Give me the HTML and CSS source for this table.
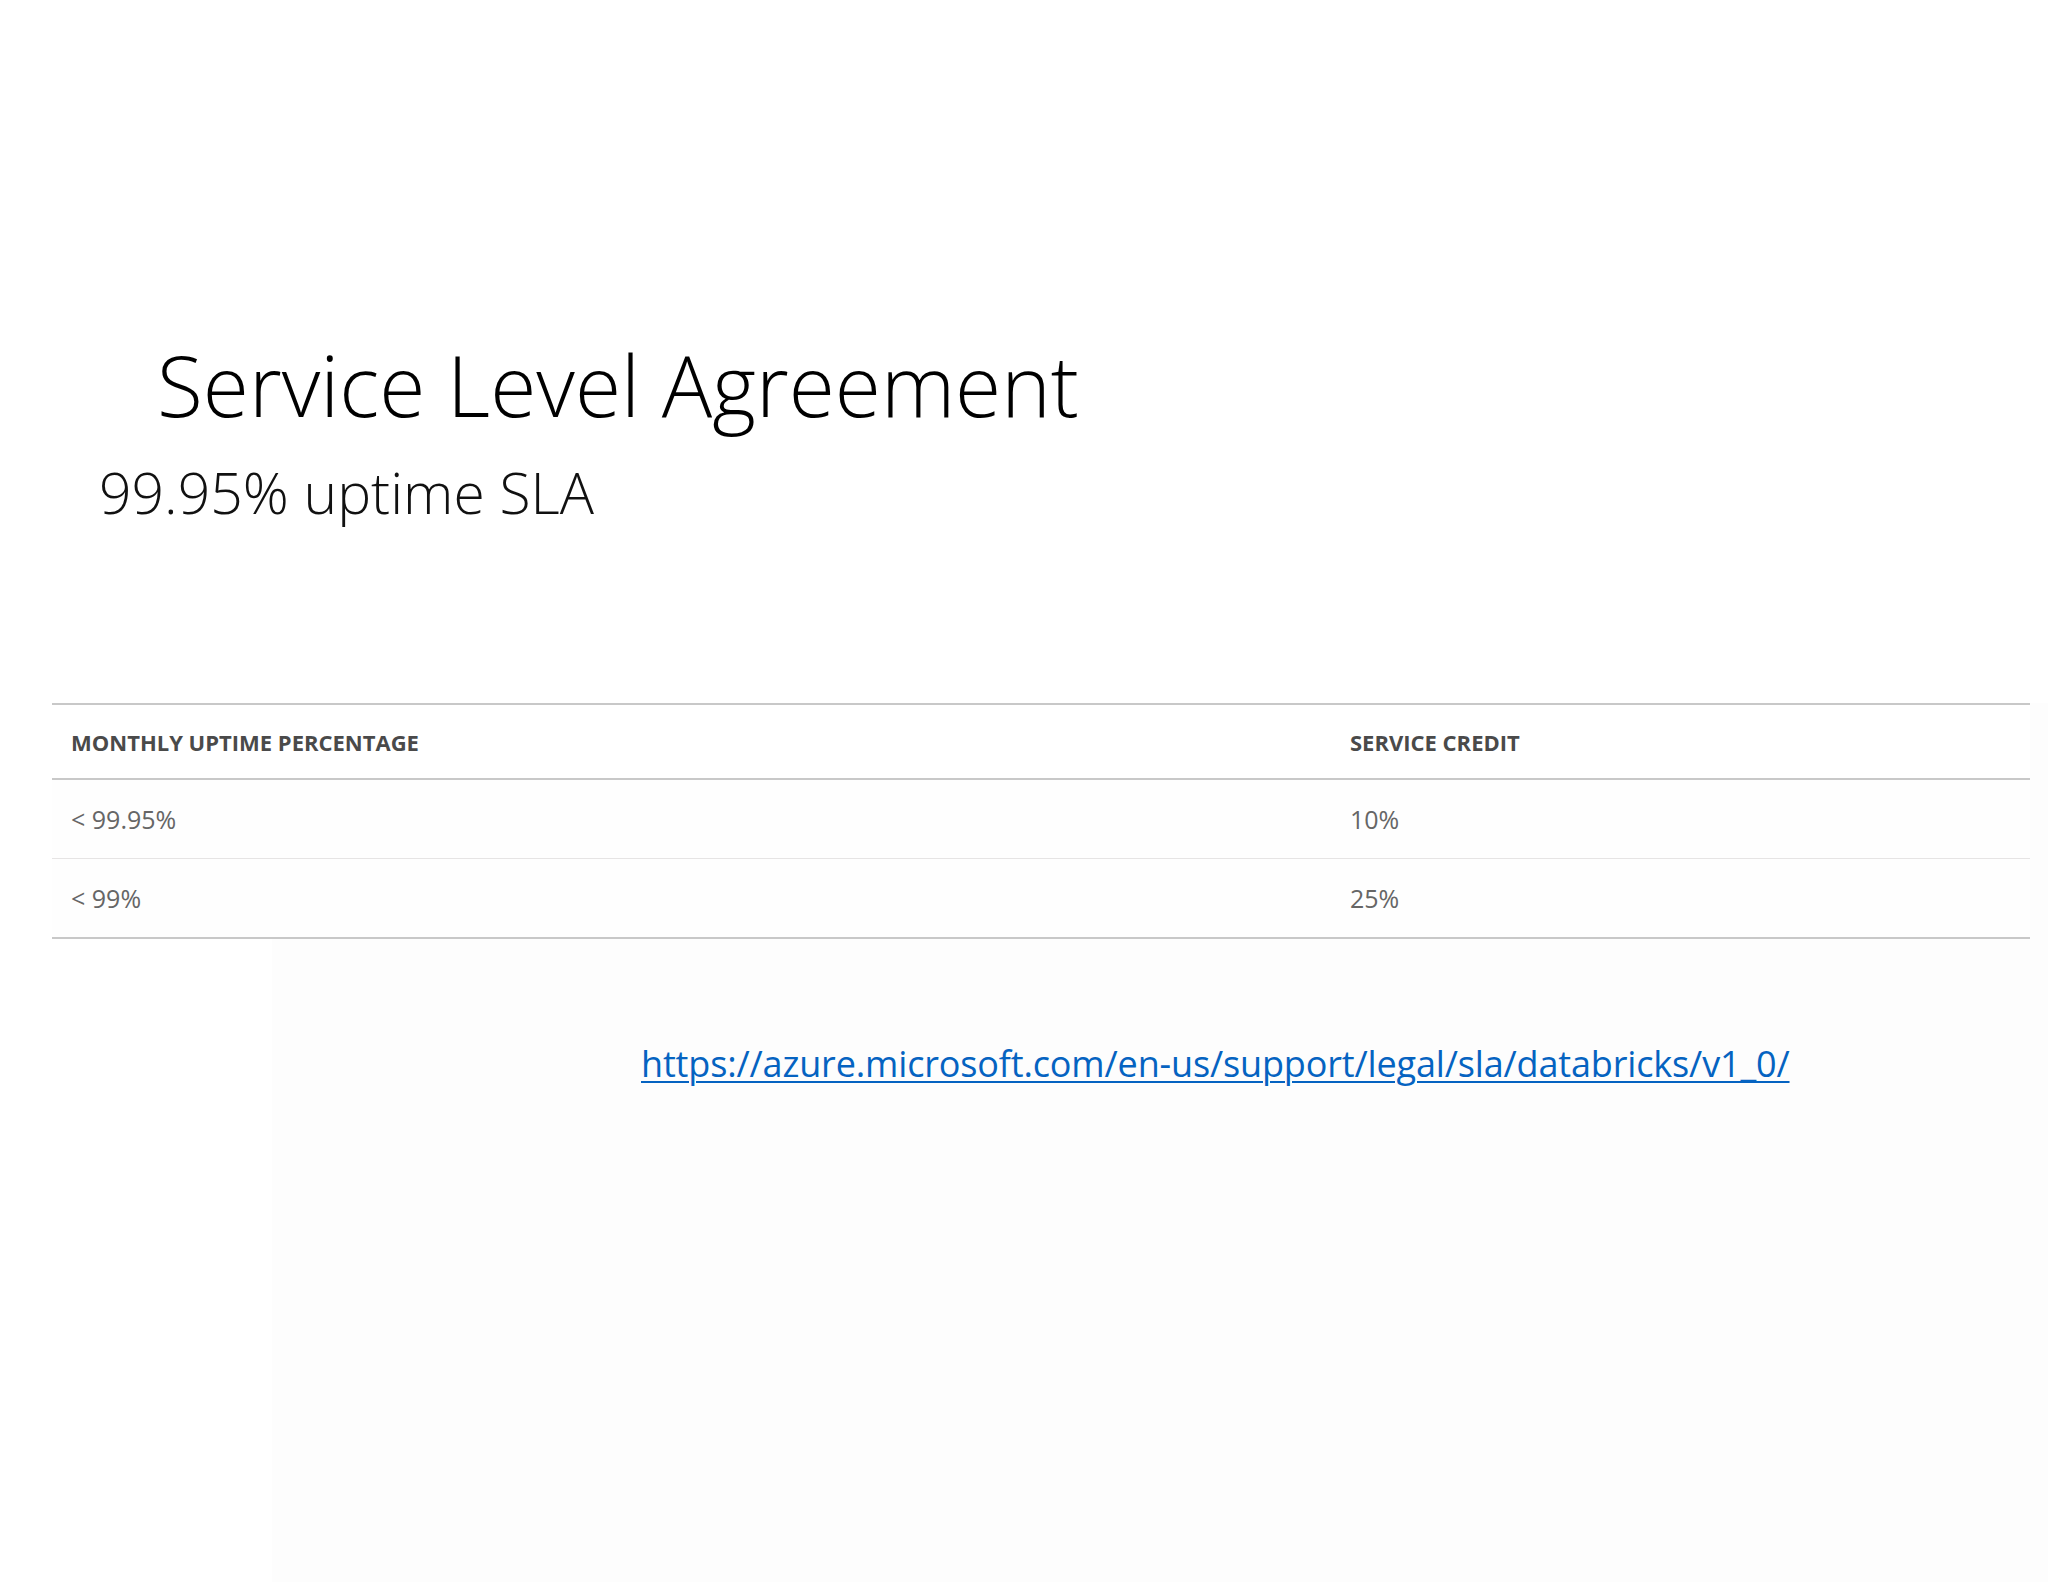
FILE: index.html
```html
<!DOCTYPE html>
<html lang="en">
<head>
<meta charset="utf-8">
<title>Service Level Agreement</title>
<link rel="stylesheet" href="styles.css">
</head>
<body>
<main class="slide">
  <h1 class="title">Service Level Agreement</h1>
  <p class="subtitle">99.95% uptime SLA</p>
  <div class="lower">
    <table class="sla">
      <thead>
        <tr><th class="col1">MONTHLY UPTIME PERCENTAGE</th><th class="col2">SERVICE CREDIT</th></tr>
      </thead>
      <tbody>
        <tr><td>&lt; 99.95%</td><td>10%</td></tr>
        <tr><td>&lt; 99%</td><td>25%</td></tr>
      </tbody>
    </table>
    <div class="linkrow">
      <a class="link" href="#">https://azure.microsoft.com/en-us/support/legal/sla/databricks/v1_0/</a>
    </div>
  </div>
</main>
</body>
</html>
```

FILE: styles.css
```css
html, body {
  margin: 0;
  padding: 0;
  background: #ffffff;
}
.slide {
  width: 2048px;
  height: 1582px;
  box-sizing: border-box;
  padding-top: 328px;
  font-family: "Open Sans", "Liberation Sans", sans-serif;
  background: #ffffff;
  display: flex;
  flex-direction: column;
}
.title {
  margin: 0 0 0 157px;
  font-weight: 300;
  font-size: 84px;
  line-height: 114px;
  color: #000;
}
.subtitle {
  margin: 10px 0 0 99px;
  font-weight: 300;
  font-size: 57px;
  line-height: 80px;
  color: #111;
}
.lower {
  flex: 1;
  margin-top: 171px;
  background: linear-gradient(to right, #ffffff 0, #ffffff 272px, #fdfdfd 272px);
}
.sla {
  margin: 0 0 0 52px;
  width: 1978px;
  border-collapse: collapse;
  background: #fefefe;
}
.sla th {
  text-align: left;
  font-weight: 700;
  font-size: 22px;
  color: #4a4a4a;
  height: 73px;
  padding: 0 0 0 19px;
  border-top: 2px solid #c8c8c8;
  border-bottom: 2px solid #c8c8c8;
  background: #fff;
}
.sla .col1 { width: 1260px; }
.sla td {
  font-size: 25px;
  color: #666666;
  height: 78px;
  padding: 0 0 0 19px;
  border-bottom: 1px solid #e6e4e4;
}
.sla tbody tr:last-child td {
  border-bottom: 2px solid #c8c8c8;
}
.linkrow {
  padding: 100px 0 0 641px;
}
.link {
  font-size: 36px;
  letter-spacing: -0.15px;
  color: #0563c1;
  text-decoration: underline;
  text-underline-offset: 4px;
  text-decoration-thickness: 2px;
}
```
